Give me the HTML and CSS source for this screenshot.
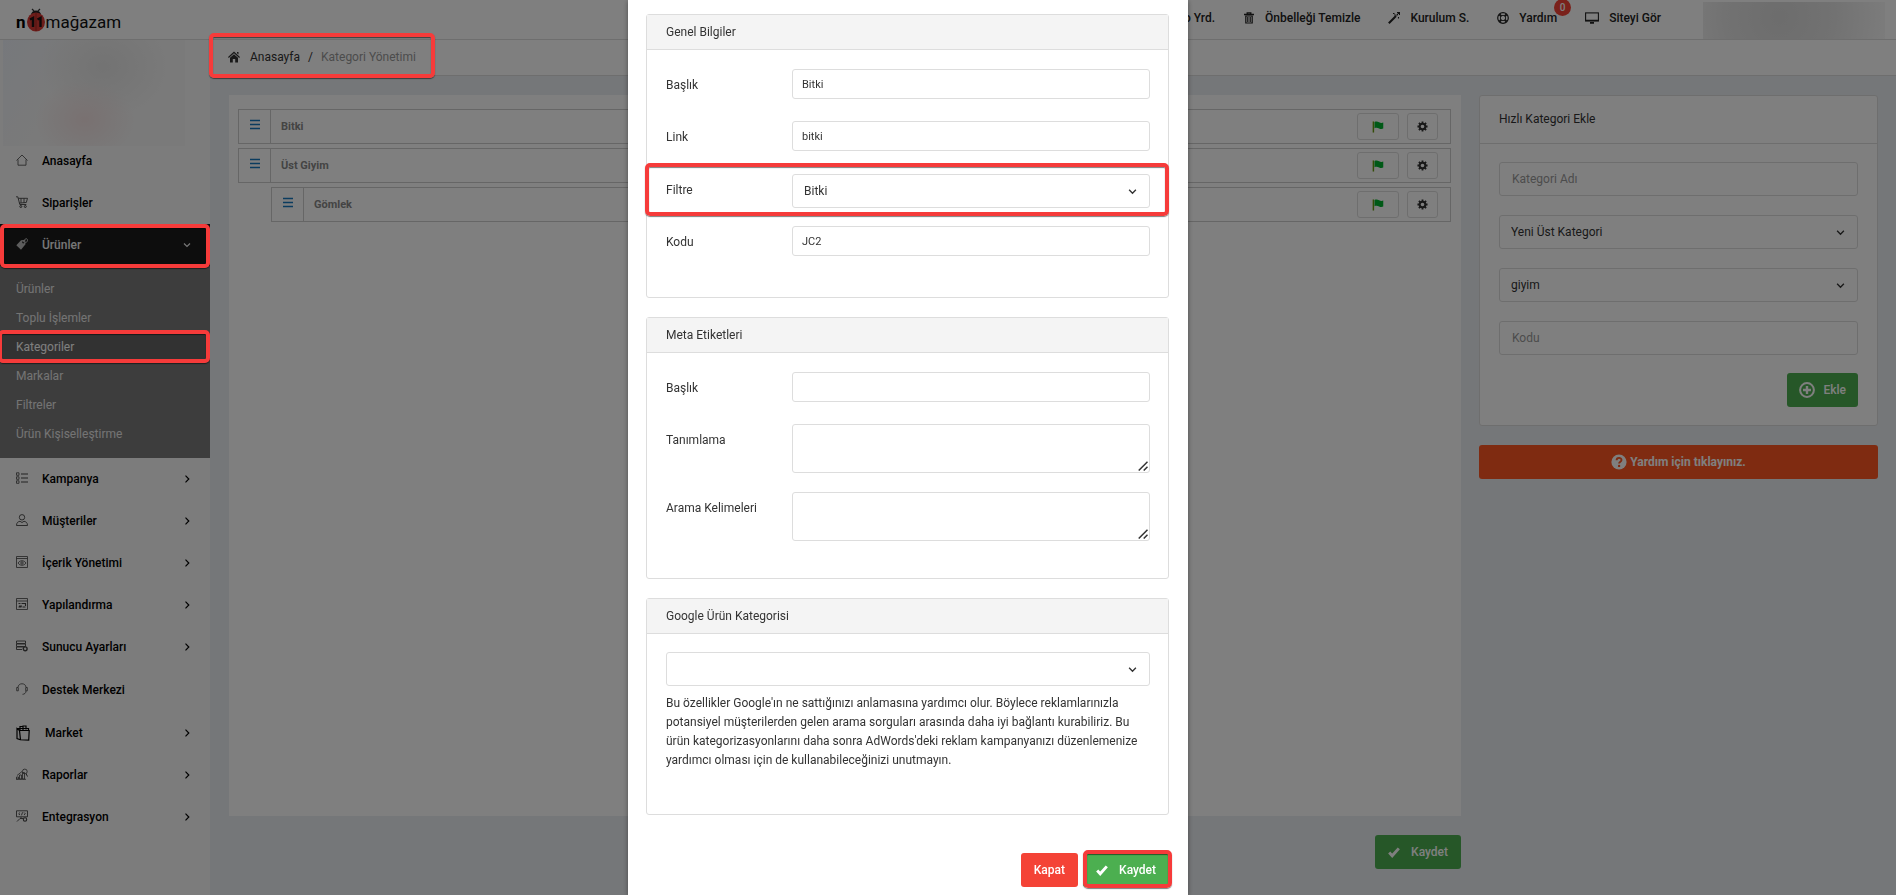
FILE: index.html
```html
<!DOCTYPE html>
<html lang="tr">
<head>
<meta charset="utf-8">
<title>Kategori Yönetimi</title>
<link rel="stylesheet" href="styles.css">
</head>
<body>
<svg class="sprite" aria-hidden="true">
  <symbol id="chev-down" viewBox="0 0 8 8"><path d="M1 2.500l3 3 3-3" fill="none" stroke="currentColor" stroke-width="1.200"/></symbol>
  <symbol id="chev-right" viewBox="0 0 8 8"><path d="M2.500.7L5.800 4 2.500 7.300" fill="none" stroke="currentColor" stroke-width="1.200"/></symbol>
  <symbol id="check" viewBox="0 0 12 12"><path d="M1.200 6.600l3 3.200L10.800 2.400" fill="none" stroke="currentColor" stroke-width="2.900"/></symbol>
  <symbol id="bars" viewBox="0 0 10 11"><path d="M0 1.500h10M0 5.500h10M0 9.500h10" stroke="currentColor" stroke-width="1.300"/></symbol>
  <symbol id="flag" viewBox="0 0 12 13"><path d="M1 .5v12" stroke="#6a9a10" stroke-width="1.600"/><path d="M2.200 1c2-1 3.600-.4 5 .4 1.400.7 3 .9 4.500.2v6.600c-1.500.8-3 .6-4.500-.1C5.700 7.400 4 7 2.200 7.900z" fill="#00b32d"/></symbol>
  <symbol id="cog" viewBox="0 0 12 12"><circle cx="6" cy="6" r="3.100" fill="none" stroke="currentColor" stroke-width="2.200"/><path d="M6 .5v2M6 9.500v2M.5 6h2M9.500 6h2M2.100 2.100l1.500 1.500M8.400 8.400l1.500 1.500M2.100 9.900l1.500-1.500M8.400 3.600l1.500-1.500" stroke="currentColor" stroke-width="2"/></symbol>
  <symbol id="grip" viewBox="0 0 10 10"><path d="M.7 9.500l8.800-8.800M5.700 9.500l3.800-3.800" stroke="currentColor" stroke-width="1.500"/></symbol>
</svg>

<header class="topbar">
  <a class="logo" href="#"><b>n</b><svg class="logo-bug" viewBox="0 0 18 24"><path d="M7 3L5 1M11 3l2-2" stroke="#333" stroke-width="1.200"/><path d="M4 7a5 4.500 0 0 1 10 0z" fill="#222"/><ellipse cx="9" cy="14" rx="9" ry="9.500" fill="#d93a34"/><path d="M9 5v18" stroke="#9a2420" stroke-width=".8"/><path d="M3 11.500l3-1.500v9M10.500 11.500l3-1.500v9" fill="none" stroke="#1c1414" stroke-width="2.400"/></svg><span>mağazam</span></a>
  <nav class="toplinks">
    <a href="#"><svg viewBox="0 0 12 12"><circle cx="6" cy="6" r="5" fill="none" stroke="currentColor" stroke-width="1.500"/></svg>Video Yrd.</a>
    <a href="#"><svg viewBox="0 0 12 12"><path d="M1 2.500h10M4.200 2V.8h3.600V2" fill="none" stroke="currentColor" stroke-width="1.300"/><path d="M2.800 4v7h6.400V4zM4.800 5v5M7.200 5v5" fill="none" stroke="currentColor" stroke-width="1.200"/></svg>Önbelleği Temizle</a>
    <a href="#"><svg viewBox="0 0 12 12"><path d="M.8 11.200L8 4" stroke="currentColor" stroke-width="2"/><path d="M8.500 3.500l2.500-2.500M5 1.500h1.500M9 .5h2.500v2.500M10.500 5v1.500M6.500 2.500l1 1" stroke="currentColor" stroke-width="1.100" fill="none"/></svg>Kurulum S.</a>
    <a href="#"><svg viewBox="0 0 12 12"><circle cx="6" cy="6" r="5.300" fill="none" stroke="currentColor" stroke-width="1.200"/><circle cx="6" cy="6" r="2.700" fill="none" stroke="currentColor" stroke-width=".9"/><path d="M2.300 2.300l2 2M9.700 2.300l-2 2M2.300 9.700l2-2M9.700 9.700l-2-2" stroke="currentColor" stroke-width="2"/></svg>Yardım<span class="badge">0</span></a>
    <a href="#"><svg class="wide" viewBox="0 0 14 12"><rect x=".6" y=".9" width="12.800" height="8" fill="none" stroke="currentColor" stroke-width="1.100"/><path d="M0 8.500h14M5 10.800h4" stroke="currentColor" stroke-width="1.700"/></svg>Siteyi Gör</a>
  </nav>
  <div class="account"></div>
</header>

<div class="page">
  <aside class="sidebar">
    <div class="profile"></div>
    <nav class="menu">
      <a href="#"><svg viewBox="0 0 12 12"><path d="M.5 6.500L6 1l5.500 5.500M2 5.500v5.700h8V5.500" fill="none" stroke="currentColor" stroke-width=".8"/></svg>Anasayfa</a>
      <a href="#"><svg viewBox="0 0 12 12"><path d="M0 .8h1.800l2 7.700h6.500M2.300 2.300h9.200L10.300 6.500l-7 .6M5 2.300v4.500M8 2.300v4.500" fill="none" stroke="currentColor" stroke-width=".9"/><circle cx="4.800" cy="10.500" r="1" fill="none" stroke="currentColor"/><circle cx="9.300" cy="10.500" r="1" fill="none" stroke="currentColor"/></svg>Siparişler</a>
      <a class="active marked" href="#"><svg viewBox="0 0 12 12"><path d="M.3 7.300L5 2.200l4.200-.4.300 4.400L5 11.700z" fill="currentColor"/><circle cx="7.200" cy="4.300" r="1.100" fill="#1a1a1a"/><path d="M7.300 4.300C8.500-.3 12.500-.2 11.300 3.200c-.4 1-1.500 1.400-2.300 1.300" fill="none" stroke="currentColor"/></svg>Ürünler<svg class="caret"><use href="#chev-down"/></svg></a>
      <div class="submenu">
        <a href="#">Ürünler</a>
        <a href="#">Toplu İşlemler</a>
        <a class="current marked" href="#">Kategoriler</a>
        <a href="#">Markalar</a>
        <a href="#">Filtreler</a>
        <a href="#">Ürün Kişiselleştirme</a>
      </div>
      <a href="#"><svg viewBox="0 0 12 12"><path d="M5 2h7M5 6h7M5 10h7" stroke="currentColor" stroke-width="1.200"/><path d="M.5.800h2.500v2.500H.5zM.5 4.800h2.500v2.500H.5zM.5 8.800h2.500v2.500H.5z" fill="none" stroke="currentColor" stroke-width=".8"/></svg>Kampanya<svg class="caret"><use href="#chev-right"/></svg></a>
      <a href="#"><svg viewBox="0 0 12 12"><circle cx="6" cy="3.300" r="2.700" fill="none" stroke="currentColor" stroke-width=".9"/><path d="M.5 11.500c0-3 1.800-4 3.500-4.200L6 8.500l2-1.200c1.700.2 3.500 1.200 3.500 4.200z" fill="none" stroke="currentColor" stroke-width=".9"/></svg>Müşteriler<svg class="caret"><use href="#chev-right"/></svg></a>
      <a href="#"><svg viewBox="0 0 12 12"><path d="M.5.500h11v11H.5zM.5 2.500h11M2 7c2-3 6-3 8 0-2 3-6 3-8 0z" fill="none" stroke="currentColor" stroke-width=".8"/><circle cx="6" cy="7" r="1.200" fill="none" stroke="currentColor" stroke-width=".8"/></svg>İçerik Yönetimi<svg class="caret"><use href="#chev-right"/></svg></a>
      <a href="#"><svg viewBox="0 0 12 12"><path d="M.5.500h11v11H.5zM.5 3h11" fill="none" stroke="currentColor" stroke-width=".8"/><path d="M2.500 5.500h2M5.500 5.500h4v2.500M2.500 9h3M6.500 9h3M3 8h3" fill="none" stroke="currentColor" stroke-width="1.100"/></svg>Yapılandırma<svg class="caret"><use href="#chev-right"/></svg></a>
      <a href="#"><svg viewBox="0 0 12 12"><path d="M.5 1h9v2.500h-9zM.5 4h9v2.500h-9zM6 9.500H.5V7H7" fill="none" stroke="currentColor" stroke-width=".9"/><circle cx="9.200" cy="8.800" r="1.900" fill="none" stroke="currentColor" stroke-width="1.400"/></svg>Sunucu Ayarları<svg class="caret"><use href="#chev-right"/></svg></a>
      <a class="support" href="#"><svg viewBox="0 0 12 12"><path d="M2 4.500C2-.5 10-.5 10 4.500M10 8c0 2-1.500 3.300-3.500 3.300M2 4.500H.7v3.300H2.300V4.500M10 4.500h1.300v3.300H9.700V4.500" fill="none" stroke="currentColor" stroke-width=".8"/></svg>Destek Merkezi</a>
      <a class="market" href="#"><svg viewBox="0 0 14 16"><path d="M3.500 5.500h9.700l-.5 9.700-8.200-.4zM3.500 5.500L1 3.500v10l3.300 1.300M1 3.500h11.500v2M4 5V1.500h3V5M7 3V1h3v3.500" fill="none" stroke="currentColor" stroke-width="1.200"/></svg>Market<svg class="caret"><use href="#chev-right"/></svg></a>
      <a href="#"><svg viewBox="0 0 12 12"><path d="M.5 11V9h2v2zM3.500 11V7h2v4zM6.500 11V4.500h2V11zM0 11.300h10M1 7.500L6 3.500" fill="none" stroke="currentColor" stroke-width=".8"/><circle cx="8.800" cy="3.500" r="2.400" fill="none" stroke="currentColor" stroke-width=".8"/><path d="M10 5.500l1.500 3" stroke="currentColor"/></svg>Raporlar<svg class="caret"><use href="#chev-right"/></svg></a>
      <a href="#"><svg viewBox="0 0 12 12"><path d="M.5.800h11v6H.5zM4 2.500L2.700 3.800 4 5M8 2.500l1.300 1.300L8 5M6.500 2.300l-1 3M5 7v1.500M1 11.500l3-3h3" fill="none" stroke="currentColor" stroke-width=".9"/><circle cx="9" cy="9.500" r="1.700" fill="none" stroke="currentColor" stroke-width="1.100"/></svg>Entegrasyon<svg class="caret"><use href="#chev-right"/></svg></a>
    </nav>
  </aside>

  <div class="main">
    <div class="crumbs">
      <nav class="trail marked">
        <a href="#"><svg viewBox="0 0 12 12"><path d="M0 6L6 .6 12 6l-.8.900L6 2.300.8 6.900z" fill="currentColor"/><path d="M2 6.800L6 3.200l4 3.600v4.700H7.200V8H4.800v3.500H2zM9 1h1.500v2.500L9 2.200z" fill="currentColor"/></svg>Anasayfa</a><span>/</span><span class="here">Kategori Yönetimi</span>
      </nav>
    </div>
    <div class="content">
      <section class="list-col">
        <ul class="list">
          <li class="row"><span class="grip"><svg><use href="#bars"/></svg></span><b>Bitki</b><button class="flag" aria-label="Durum"><svg><use href="#flag"/></svg></button><button class="cog" aria-label="Ayarlar"><svg><use href="#cog"/></svg></button></li>
          <li class="row"><span class="grip"><svg><use href="#bars"/></svg></span><b>Üst Giyim</b><button class="flag" aria-label="Durum"><svg><use href="#flag"/></svg></button><button class="cog" aria-label="Ayarlar"><svg><use href="#cog"/></svg></button></li>
          <li class="row nested"><span class="grip"><svg><use href="#bars"/></svg></span><b>Gömlek</b><button class="flag" aria-label="Durum"><svg><use href="#flag"/></svg></button><button class="cog" aria-label="Ayarlar"><svg><use href="#cog"/></svg></button></li>
        </ul>
        <button class="btn green"><svg><use href="#check"/></svg>Kaydet</button>
      </section>
      <aside class="side-col">
        <form class="quick">
          <h2>Hızlı Kategori Ekle</h2>
          <div class="quick-body">
            <input type="text" placeholder="Kategori Adı" aria-label="Kategori Adı">
            <span class="select"><select aria-label="Üst Kategori"><option>Yeni Üst Kategori</option></select><svg><use href="#chev-down"/></svg></span>
            <span class="select"><select aria-label="Filtre"><option>giyim</option></select><svg><use href="#chev-down"/></svg></span>
            <input type="text" placeholder="Kodu" aria-label="Kodu">
            <button type="button" class="btn green add"><svg viewBox="0 0 16 16"><circle cx="8" cy="8" r="6.900" fill="none" stroke="currentColor" stroke-width="2"/><path d="M8 4v8M4 8h8" stroke="currentColor" stroke-width="2.400"/></svg>Ekle</button>
          </div>
        </form>
        <a class="help" href="#"><svg viewBox="0 0 16 16"><circle cx="8" cy="8" r="7.600" fill="#fff"/><path d="M5.600 6.300c0-3.300 4.900-3.100 4.900-.3 0 1.700-2.400 1.700-2.400 3.600" fill="none" stroke="#ff5722" stroke-width="1.900"/><circle cx="8.100" cy="11.900" r="1.200" fill="#ff5722"/></svg>Yardım için tıklayınız.</a>
      </aside>
    </div>
  </div>
</div>

<div class="backdrop">
  <div class="modal" role="dialog" aria-label="Kategori Düzenle">
    <section class="card">
      <h2>Genel Bilgiler</h2>
      <div class="card-body">
        <div class="field"><label for="title">Başlık</label><input id="title" type="text" value="Bitki"></div>
        <div class="field"><label for="link">Link</label><input id="link" type="text" value="bitki"></div>
        <div class="field marked"><label for="filter">Filtre</label><span class="select"><select id="filter"><option>Bitki</option></select><svg><use href="#chev-down"/></svg></span></div>
        <div class="field"><label for="code">Kodu</label><input id="code" type="text" value="JC2"></div>
      </div>
    </section>
    <section class="card">
      <h2>Meta Etiketleri</h2>
      <div class="card-body meta">
        <div class="field"><label for="mtitle">Başlık</label><input id="mtitle" type="text"></div>
        <div class="field"><label for="mdesc">Tanımlama</label><span class="area"><textarea id="mdesc"></textarea><svg><use href="#grip"/></svg></span></div>
        <div class="field"><label for="mkeys">Arama Kelimeleri</label><span class="area"><textarea id="mkeys"></textarea><svg><use href="#grip"/></svg></span></div>
      </div>
    </section>
    <section class="card">
      <h2>Google Ürün Kategorisi</h2>
      <div class="card-body google">
        <span class="select"><select aria-label="Google Ürün Kategorisi"><option></option></select><svg><use href="#chev-down"/></svg></span>
        <p>Bu özellikler Google'ın ne sattığınızı anlamasına yardımcı olur. Böylece reklamlarınızla potansiyel müşterilerden gelen arama sorguları arasında daha iyi bağlantı kurabiliriz. Bu ürün kategorizasyonlarını daha sonra AdWords'deki reklam kampanyanızı düzenlemenize yardımcı olması için de kullanabileceğinizi unutmayın.</p>
      </div>
    </section>
    <footer class="actions">
      <button class="btn red">Kapat</button>
      <button class="btn green marked"><svg><use href="#check"/></svg>Kaydet</button>
    </footer>
  </div>
</div>
</body>
</html>
```

FILE: styles.css
```css
* { box-sizing: border-box; }
body {
  margin: 0;
  height: 100vh;
  overflow: hidden;
  display: flex;
  flex-direction: column;
  background: #ebeef2;
  color: #333;
  font: 12px/20px Roboto, sans-serif;
}
a { color: inherit; text-decoration: none; }
h2, p, ul { margin: 0; padding: 0; }
h2 { font-size: 12px; font-weight: 400; }
svg { width: 12px; height: 12px; flex: none; }
.sprite { display: none; }

input, select, textarea, button { font: inherit; color: inherit; }
input, select, textarea {
  width: 100%;
  min-width: 0;
  border: 1px solid #ddd;
  border-radius: 3px;
  background: #fff;
}
input { height: 34px; padding: 0 12px; }
input::placeholder { color: #999; opacity: 1; }
select { height: 34px; padding: 0 11px; appearance: none; }
.select, .area { position: relative; display: block; }
.select svg {
  position: absolute;
  right: 13px;
  top: 13px;
  width: 9px;
  height: 9px;
}

.marked { position: relative; }
.marked::after {
  content: "";
  position: absolute;
  z-index: 30;
  inset: 0;
  border: 4px solid #f63b3a;
  border-radius: 5px;
  box-shadow: 0 1px 1px rgba(0, 0, 0, .5), inset 0 1px 1px rgba(0, 0, 0, .5);
  pointer-events: none;
}

.btn {
  display: flex;
  align-items: center;
  gap: 11px;
  height: 34px;
  padding: 0 13px;
  border: 0;
  border-radius: 3px;
  color: #fff;
  font-weight: 500;
}
.green { background: #4caf50; }
.red { background: #f44336; }

/* top bar */
.topbar {
  display: flex;
  align-items: stretch;
  flex: none;
  height: 40px;
  padding: 0 11px 0 16px;
  background: #fff;
  border-bottom: 1px solid #ddd;
}
.logo {
  display: flex;
  align-items: center;
  padding-top: 5px;
  font-size: 17px;
  color: #111;
}
.logo b { color: #000; }
.logo-bug { width: 18px; height: 24px; margin: 0 1px 4px; }
.toplinks {
  display: flex;
  align-items: center;
  gap: 28px;
  margin-left: auto;
  padding-bottom: 4px;
  font-weight: 500;
  color: #222;
}
.toplinks a { position: relative; display: flex; align-items: center; gap: 10px; }
.toplinks .wide { width: 14px; }
.badge {
  position: absolute;
  top: -9px;
  right: -14px;
  width: 17px;
  height: 17px;
  border-radius: 50%;
  background: #f44336;
  color: #fff;
  font-size: 10px;
  line-height: 17px;
  text-align: center;
}
.account {
  width: 182px;
  margin: 2px 0 0 42px;
  background: radial-gradient(circle at 42% 40%, #dadada, #e4e4e4 50%, #f8f8f8);
}

/* side bar */
.page { display: flex; flex: 1; min-height: 0; }
.sidebar { width: 210px; flex: none; background: #f9f9f9; overflow: hidden; }
.profile {
  width: 182px;
  height: 106px;
  margin-left: 3px;
  margin-bottom: -6px;
  background:
    radial-gradient(ellipse at 45% 75%, #f2e2e2, transparent 35%),
    radial-gradient(ellipse at 55% 25%, #e6e6e6, transparent 45%),
    linear-gradient(120deg, #edf1f8, #f4f4f4 35%);
}
.menu > a {
  display: flex;
  align-items: center;
  height: 42px;
  gap: 14px;
  padding: 0 19px 0 16px;
  font-weight: 500;
  color: #000;
}
.menu > a svg:first-child { color: #444; margin-bottom: 2px; }
.menu .caret { width: 8px; height: 8px; margin-left: auto; }
.menu .active { background: #1a1a1a; color: #eee; }
.menu .active::after { inset: 0 0 -2px; }
.menu > .active svg:first-child { color: #bbb; }
.menu > .support { height: 44px; }
.menu > .market svg:first-child { width: 14px; height: 16px; color: #000; margin-bottom: 0; }
.menu > .market { gap: 15px; }
.submenu { padding: 8px 0 10px; background: #7a7a7a; color: #e8e8e8; }
.submenu a { display: flex; align-items: center; height: 29px; padding: 0 16px; }
.submenu .current { background: #646464; color: #fff; }
.submenu .current::after { inset: -2px 0 -2px -2px; }

/* page body */
.main { flex: 1; min-width: 0; display: flex; flex-direction: column; }
.crumbs {
  flex: none;
  display: flex;
  height: 36px;
  padding: 0 18px;
  background: #fff;
  border-bottom: 1px solid #ddd;
}
.trail { display: flex; align-items: center; gap: 8px; padding-bottom: 2px; }
.trail a { display: flex; align-items: center; gap: 10px; }
.trail .here { color: #999; }
.trail::after { inset: -7px -19px -3px -19px; }
.content { flex: 1; display: flex; gap: 18px; padding: 19px 18px 26px 19px; min-height: 0; }
.list-col { flex: 1; min-width: 0; display: flex; flex-direction: column; align-items: flex-end; gap: 19px; }
.list {
  flex: 1;
  align-self: stretch;
  display: flex;
  flex-direction: column;
  gap: 4px;
  padding: 14px 10px 0 9px;
  background: #fff;
  list-style: none;
}
.row {
  display: flex;
  align-items: center;
  height: 35px;
  padding-right: 12px;
  border: 1px solid #ccc;
  font-size: 11px;
  color: #888;
}
.nested { margin-left: 33px; }
.grip {
  align-self: stretch;
  display: grid;
  place-items: center;
  width: 32px;
  margin-right: 10px;
  padding-bottom: 4px;
  border-right: 1px solid #ccc;
  color: #1678be;
}
.grip svg { width: 10px; height: 11px; }
.row b { flex: 1; }
.row button {
  display: grid;
  place-items: center;
  height: 27px;
  padding: 0;
  border: 1px solid #ddd;
  border-radius: 3px;
  background: none;
  color: #333;
}
.row .flag { width: 42px; margin-right: 8px; }
.row .cog { width: 31px; }
.row .cog svg { width: 11px; height: 11px; }
.list-col .btn { flex: none; }

.side-col { width: 399px; flex: none; display: flex; flex-direction: column; gap: 19px; }
.quick { border: 1px solid #ddd; border-radius: 3px; background: #fff; }
.quick h2 { padding: 13px 19px 14px; border-bottom: 1px solid #ddd; }
.quick-body { display: flex; flex-direction: column; gap: 19px; padding: 18px 19px; }
.add { align-self: flex-end; margin-top: -1px; padding: 0 12px; gap: 8px; }
.add svg, .help svg { width: 16px; height: 16px; }
.help {
  display: flex;
  align-items: center;
  justify-content: center;
  gap: 3px;
  height: 34px;
  border-radius: 3px;
  background: #ff5722;
  color: #fff;
  font-weight: 700;
}

/* dialog */
.backdrop {
  position: fixed;
  z-index: 10;
  inset: 0;
  display: flex;
  justify-content: center;
  padding-right: 80px;
  background: rgba(0, 0, 0, .5);
}
.modal {
  width: 560px;
  padding: 14px 19px 0 18px;
  background: #fff;
  box-shadow: 0 1px 5px rgba(0, 0, 0, .4);
}
.card { margin-bottom: 19px; border: 1px solid #ddd; border-radius: 3px; }
.card h2 { padding: 7px 19px; background: #f4f4f4; border-bottom: 1px solid #ddd; }
.card-body { display: flex; flex-direction: column; gap: 22px; padding: 19px 18px 41px 19px; }
.field { display: grid; grid-template-columns: 126px 1fr; align-items: start; }
.field label { padding-top: 6px; }
.field input { height: 30px; padding: 0 9px; font-size: 11px; }
.area textarea { display: block; height: 49px; resize: none; }
.area svg { position: absolute; right: 2px; bottom: 2px; width: 10px; height: 10px; }
.field .select { margin: 0 0 -4px; }
.field.marked { margin-top: 1px; }
.field.marked::after { inset: -11px -19px -12px -21px; }
.meta { padding-bottom: 37px; }
.meta .field + .field + .field { margin-top: -3px; }
.google { gap: 8px; padding-top: 18px; padding-bottom: 44px; }
.google p { line-height: 19px; }
.actions { display: flex; justify-content: flex-end; gap: 5px; padding-top: 19px; }
.actions .marked::after { inset: -3px -3px -1px 0; }
```
